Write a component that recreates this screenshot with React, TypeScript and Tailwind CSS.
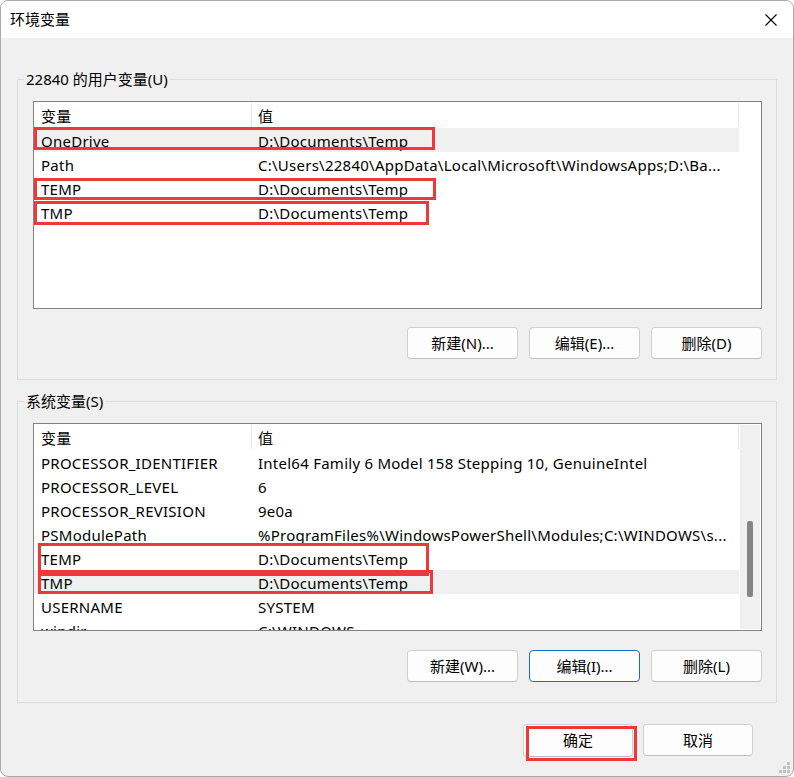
import React from "react";

type Row = { name: string; value: string; selected?: boolean };

const userRows: Row[] = [
  { name: "OneDrive", value: "D:\\Documents\\Temp", selected: true },
  { name: "Path", value: "C:\\Users\\22840\\AppData\\Local\\Microsoft\\WindowsApps;D:\\Ba..." },
  { name: "TEMP", value: "D:\\Documents\\Temp" },
  { name: "TMP", value: "D:\\Documents\\Temp" },
];

const systemRows: Row[] = [
  { name: "PROCESSOR_IDENTIFIER", value: "Intel64 Family 6 Model 158 Stepping 10, GenuineIntel" },
  { name: "PROCESSOR_LEVEL", value: "6" },
  { name: "PROCESSOR_REVISION", value: "9e0a" },
  { name: "PSModulePath", value: "%ProgramFiles%\\WindowsPowerShell\\Modules;C:\\WINDOWS\\s..." },
  { name: "TEMP", value: "D:\\Documents\\Temp" },
  { name: "TMP", value: "D:\\Documents\\Temp", selected: true },
  { name: "USERNAME", value: "SYSTEM" },
  { name: "windir", value: "C:\\WINDOWS" },
];

function WinButton({ label, focused }: { label: string; focused?: boolean }) {
  return (
    <button
      className={
        "h-[32px] w-[111px] rounded-[4px] border bg-[#fdfdfd] text-[15px] text-black " +
        (focused ? "border-[#1a6ec2]" : "border-[#d0d0d0] border-b-[#bdbdbd]")
      }
    >
      {label}
    </button>
  );
}

function VarList({ rows, scroll, marks }: { rows: Row[]; scroll?: boolean; marks: React.ReactNode }) {
  return (
    <div className="relative flex h-[208px] w-[729px] overflow-hidden border border-[#838383] bg-white">
      <div className="w-[705px] shrink-0 tracking-[0.25px]">
        {/* header */}
        <div className="flex h-[26px] items-center text-[15px]">
          <div className="flex h-[24px] w-[218px] items-center border-r border-[#e5e5e5] pt-[2px] pl-[7px]">变量</div>
          <div className="flex h-[24px] flex-1 items-center border-r border-[#e5e5e5] pt-[2px] pl-[6px]">值</div>
        </div>
        {rows.map((r) => (
          <div
            key={r.name}
            className={"flex h-[24px] items-center pt-[2px] text-[15px] " + (r.selected ? "bg-[#f0f0f0]" : "")}
          >
            <div className="w-[218px] shrink-0 pl-[7px] whitespace-nowrap">{r.name}</div>
            <div className="flex-1 overflow-hidden pl-[6px] whitespace-nowrap">{r.value}</div>
          </div>
        ))}
      </div>
      <div className="flex-1 p-[1px]">
        {scroll && (
          <div className="flex h-full w-[20px] justify-center bg-[#f0f0f0] pt-[96px]">
            <div className="h-[76px] w-[6px] rounded-[2px] bg-[#858585]" />
          </div>
        )}
      </div>
      {marks}
    </div>
  );
}

function Mark({ cls }: { cls: string }) {
  return <div className={"pointer-events-none absolute border-[3px] border-[#ef3838] " + cls} />;
}

function Group({ title, children, className }: { title: string; children: React.ReactNode; className?: string }) {
  return (
    <fieldset className={"w-[760px] border border-[#dcdcdc] " + (className ?? "")}>
      <legend className="ml-[6px] px-[2px] text-[15px] leading-[20px]">{title}</legend>
      <div className="pt-[12px] pr-[14px] pb-[20px] pl-[15px]">{children}</div>
    </fieldset>
  );
}

export default function App() {
  return (
    <div className="relative h-[777px] w-[794px] overflow-hidden rounded-[8px] border border-[#a9a9a9] bg-[#f0f0f0] font-['Noto_Sans','Noto_Sans_CJK_SC',sans-serif] text-black">
      {/* title bar */}
      <div className="flex h-[37px] items-center justify-between bg-white pr-[16px] pl-[9px]">
        <span className="text-[15px]">环境变量</span>
        <svg width="12" height="12" viewBox="0 0 12 12" className="text-black">
          <path d="M0.5 0.5 L11.5 11.5 M11.5 0.5 L0.5 11.5" stroke="currentColor" strokeWidth="1.1" />
        </svg>
      </div>

      <div className="pl-[16px]">
        <Group title="22840 的用户变量(U)" className="mt-[31px]">
          <VarList
            rows={userRows}
            marks={
              <>
                <Mark cls="left-0 top-[25px] h-[23px] w-[401px]" />
                <Mark cls="left-0 top-[76px] h-[22px] w-[402px]" />
                <Mark cls="left-0 top-[99px] h-[24px] w-[395px]" />
              </>
            }
          />
          <div className="mt-[18px] flex justify-end gap-[11px]">
            <WinButton label="新建(N)..." />
            <WinButton label="编辑(E)..." />
            <WinButton label="删除(D)" />
          </div>
        </Group>

        <Group title="系统变量(S)" className="mt-[11px]">
          <VarList
            rows={systemRows}
            scroll
            marks={
              <>
                <Mark cls="left-[4px] top-[119px] h-[33px] w-[391px]" />
                <Mark cls="left-[4px] top-[146px] h-[24px] w-[395px]" />
              </>
            }
          />
          <div className="mt-[19px] flex justify-end gap-[11px]">
            <WinButton label="新建(W)..." />
            <WinButton label="编辑(I)..." focused />
            <WinButton label="删除(L)" />
          </div>
        </Group>
      </div>

      <div className="mt-[21px] flex justify-end gap-[10px] pr-[40px]">
        <div className="relative">
          <button className="h-[33px] w-[110px] rounded-[4px] border border-[#d0d0d0] border-b-[#bdbdbd] bg-[#fdfdfd] text-[15px]">
            确定
          </button>
          <div className="pointer-events-none absolute top-[2px] left-[3px] h-[35px] w-[111px] border-[3px] border-[#ef3838]" />
        </div>
        <button className="h-[32px] w-[110px] rounded-[4px] border border-[#d0d0d0] border-b-[#bdbdbd] bg-[#fdfdfd] text-[15px]">
          取消
        </button>
      </div>

      {/* resize grip */}
      <svg className="absolute right-[2px] bottom-[2px]" width="12" height="12" viewBox="0 0 12 12" fill="#c2c2c2">
        <rect x="8" y="0" width="3" height="3" />
        <rect x="4" y="4" width="3" height="3" />
        <rect x="8" y="4" width="3" height="3" />
        <rect x="0" y="8" width="3" height="3" />
        <rect x="4" y="8" width="3" height="3" />
        <rect x="8" y="8" width="3" height="3" />
      </svg>
    </div>
  );
}
